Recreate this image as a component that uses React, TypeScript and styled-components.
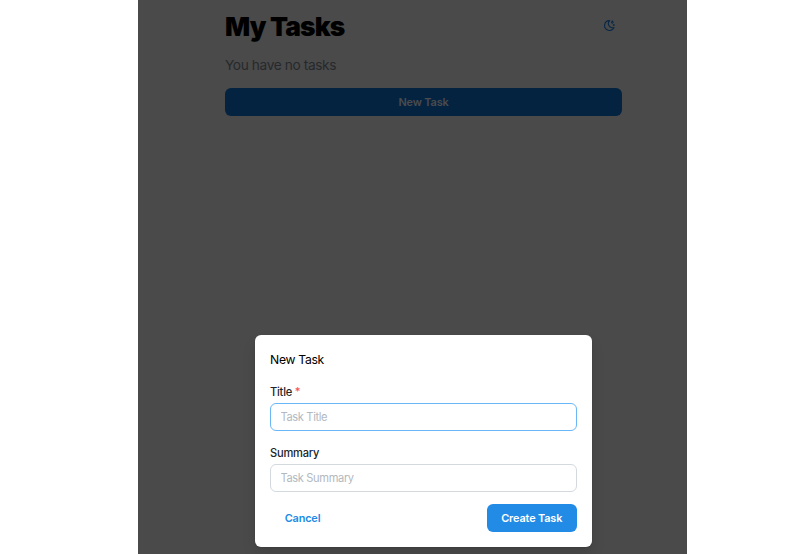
import React from 'react';
import styled, { createGlobalStyle } from 'styled-components';

const GlobalStyle = createGlobalStyle`
  * { box-sizing: border-box; }
  body { margin: 0; background: #fff; font-family: Inter, "Liberation Sans", sans-serif; }
  button, input { font-family: inherit; }
`;

const Page = styled.div`
  position: relative;
  width: 549px;
  height: 554px;
  margin-left: 138px;
  padding: 9px 65px 0 87px;
  background: #4a4a4a;
  overflow: hidden;
`;

const Header = styled.header`
  display: flex;
  justify-content: space-between;
  align-items: center;
  height: 34px;
`;

const Heading = styled.h1`
  margin: 0;
  padding-top: 2px;
  font-size: 26.3px;
  line-height: 34px;
  font-weight: 900;
  letter-spacing: -0.85px;
  color: #000;
`;

const IconButton = styled.button`
  display: flex;
  align-items: center;
  justify-content: center;
  width: 25px;
  height: 28px;
  margin-bottom: 2px;
  padding: 0;
  border: 0;
  background: none;
  color: #082747;
`;

const EmptyText = styled.p`
  margin: 12px 0 13px;
  font-size: 13.7px;
  line-height: 20px;
  letter-spacing: -0.38px;
  color: #26292c;
`;

const Button = styled.button<{ $kind: 'dimmed' | 'filled' | 'subtle' }>`
  display: block;
  height: ${p => (p.$kind === 'dimmed' ? 27.5 : 28)}px;
  width: ${p => (p.$kind === 'dimmed' ? '397px' : p.$kind === 'filled' ? '90.5px' : '65px')};
  padding: 0;
  border: 0;
  border-radius: 6px;
  font-size: 10.9px;
  line-height: 28px;
  font-weight: 600;
  letter-spacing: -0.15px;
  white-space: nowrap;
  background: ${p => ({ dimmed: '#042341', filled: '#228be6', subtle: 'transparent' })[p.$kind]};
  color: ${p => ({ dimmed: '#4a4c4e', filled: '#fff', subtle: '#228be6' })[p.$kind]};
`;

const Modal = styled.section`
  position: absolute;
  left: 117px;
  top: 335px;
  width: 337px;
  height: 212px;
  padding: 15px;
  border-radius: 6px;
  background: #fff;
  box-shadow: 0 1px 2px rgba(0, 0, 0, 0.12), 0 8px 14px rgba(0, 0, 0, 0.1);
`;

const ModalTitle = styled.h2`
  margin: 0 0 15px;
  font-size: 12.2px;
  line-height: 19px;
  font-weight: 400;
  letter-spacing: -0.3px;
  color: #000;
`;

const Field = styled.label`
  display: block;
  height: 61px;
`;

const LabelText = styled.span`
  display: block;
  height: 19px;
  font-size: 11.1px;
  line-height: 17px;
  font-weight: 500;
  letter-spacing: -0.22px;
  color: #212529;
`;

const Required = styled.span`
  color: #fa5252;
`;

const Input = styled.input<{ $active?: boolean }>`
  display: block;
  width: 307px;
  height: 28px;
  padding: 0 9.5px;
  border: 1px solid ${p => (p.$active ? '#69b7f7' : '#d4d9de')};
  border-radius: 6px;
  outline: 0;
  background: #fff;
  font-size: 11.1px;
  letter-spacing: -0.36px;
  &::placeholder { color: #b2b9c0; opacity: 1; }
`;

const Actions = styled.div`
  display: flex;
  justify-content: space-between;
  margin-top: -2px;
`;

const MoonIcon = () => (
  <svg width="13" height="13" viewBox="0 0 13 13" fill="none" stroke="currentColor" strokeLinecap="round" strokeLinejoin="round">
    <path d="M6.5 1.6H6.7A4.1 4.1 0 0 0 11 8.4A4.9 4.9 0 1 1 6.5 1.6Z" strokeWidth="1.1" />
    <path d="M9.3 2.1Q9.4 3.2 10.5 3.3Q9.4 3.4 9.3 4.5Q9.2 3.4 8.1 3.3Q9.2 3.2 9.3 2.1Z" strokeWidth="1" />
    <path d="M10.3 6H11.3M10.8 5.5V6.5" strokeWidth="0.9" />
  </svg>
);

export default function App() {
  return (
    <>
      <GlobalStyle />
      <Page>
        <Header>
          <Heading>My Tasks</Heading>
          <IconButton aria-label="Toggle color scheme"><MoonIcon /></IconButton>
        </Header>
        <EmptyText>You have no tasks</EmptyText>
        <Button $kind="dimmed">New Task</Button>
        <Modal role="dialog">
          <ModalTitle>New Task</ModalTitle>
          <Field>
            <LabelText>Title <Required>*</Required></LabelText>
            <Input $active placeholder="Task Title" />
          </Field>
          <Field>
            <LabelText>Summary</LabelText>
            <Input placeholder="Task Summary" />
          </Field>
          <Actions>
            <Button $kind="subtle">Cancel</Button>
            <Button $kind="filled">Create Task</Button>
          </Actions>
        </Modal>
      </Page>
    </>
  );
}
